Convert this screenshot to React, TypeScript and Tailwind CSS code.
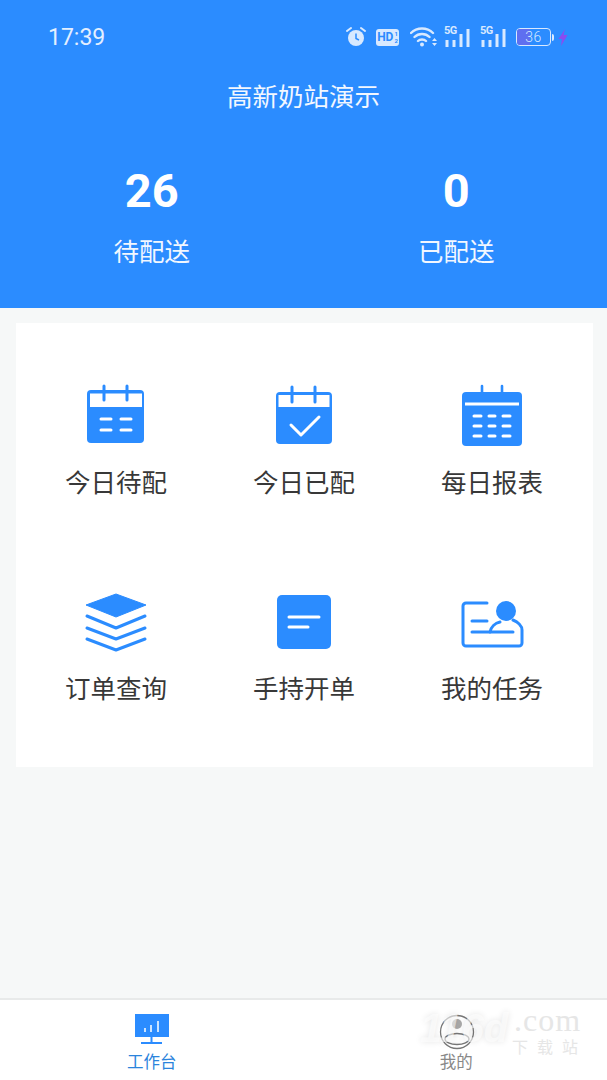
const font = { fontFamily: '"Noto Sans CJK SC", "Noto Sans", sans-serif' };
const BLUE = "#2b8cff";

function Cal1() {
  return (
    <svg width="64" height="64" viewBox="0 0 64 64">
      <rect x="3" y="6" width="57" height="53" rx="4" fill={BLUE} />
      <rect x="6" y="9.500" width="52" height="13.500" fill="#fff" />
      <path d="M20 2v14M43 2v14" stroke={BLUE} strokeWidth="3" strokeLinecap="round" />
      <path d="M17 35h10M37 35h10M17 46h10M37 46h10" stroke="#fff" strokeWidth="3" strokeLinecap="round" />
    </svg>
  );
}
function Cal2() {
  return (
    <svg width="64" height="64" viewBox="0 0 64 64">
      <rect x="4" y="8" width="56" height="52" rx="4" fill={BLUE} />
      <rect x="6.500" y="11" width="51" height="12" fill="#fff" />
      <path d="M20 3v15M43 3v15" stroke={BLUE} strokeWidth="3" strokeLinecap="round" />
      <path d="M19 41l10 10 18-18" fill="none" stroke="#fff" strokeWidth="3" strokeLinecap="round" strokeLinejoin="round" />
    </svg>
  );
}
function Cal3() {
  return (
    <svg width="64" height="64" viewBox="0 0 64 64">
      <rect x="2" y="8" width="60" height="54" rx="4" fill={BLUE} />
      <path d="M22 2v8M42 2v8" stroke={BLUE} strokeWidth="2.600" strokeLinecap="round" />
      <path d="M5 20h54" stroke="#fff" strokeWidth="3" />
      <path d="M14 32h7M29 32h6M43 32h7M14 42h7M29 42h6M43 42h7M14 52h7M29 52h6M43 52h7" stroke="#fff" strokeWidth="3" strokeLinecap="round" />
    </svg>
  );
}
function Layers() {
  return (
    <svg width="64" height="64" viewBox="0 0 64 64">
      <path d="M32 4L62 15 32 27 2 15z" fill={BLUE} stroke={BLUE} strokeWidth="1" strokeLinejoin="round" />
      <path d="M3 26l29 12 29-12M3 38l29 11 29-11M3 49l29 11 29-11" fill="none" stroke={BLUE} strokeWidth="3" strokeLinecap="round" strokeLinejoin="round" />
    </svg>
  );
}
function Doc() {
  return (
    <svg width="64" height="64" viewBox="0 0 64 64">
      <rect x="5" y="5" width="54" height="54" rx="5" fill={BLUE} />
      <path d="M17 27h30M17 37h19" stroke="#fff" strokeWidth="3" strokeLinecap="round" />
    </svg>
  );
}
function Card() {
  return (
    <svg width="64" height="64" viewBox="0 0 64 64">
      <path d="M27 13H6a3 3 0 0 0-3 3v37a3 3 0 0 0 3 3h53a3 3 0 0 0 3-3V40c0-4-4-8-9-10" fill="none" stroke={BLUE} strokeWidth="3" strokeLinecap="round" />
      <circle cx="46" cy="21" r="10" fill={BLUE} />
      <path d="M30 42c1-5 5-9 10-10" fill="none" stroke={BLUE} strokeWidth="3" strokeLinecap="round" />
      <path d="M12 31h15M12 42h41" stroke={BLUE} strokeWidth="3" strokeLinecap="round" />
    </svg>
  );
}

const items = [
  { label: "今日待配", icon: <Cal1 /> },
  { label: "今日已配", icon: <Cal2 /> },
  { label: "每日报表", icon: <Cal3 /> },
  { label: "订单查询", icon: <Layers /> },
  { label: "手持开单", icon: <Doc /> },
  { label: "我的任务", icon: <Card /> },
];

function Signal() {
  return (
    <div className="relative w-[26px] h-[21px]">
      <span className="absolute left-0 top-[-2px] text-[11px] leading-[12px] font-bold text-[#d8e9ff] tracking-[-0.5px]" style={{ fontFamily: '"Roboto", sans-serif' }}>5G</span>
      <svg className="absolute left-0 top-0" width="26" height="21" viewBox="0 0 26 21">
        <path d="M3 13v7M10 13v7M17 7v13M24 2v18" stroke="#d8e9ff" strokeWidth="3" />
      </svg>
    </div>
  );
}

function StatusIcons() {
  return (
    <div className="flex items-center">
      <svg width="20" height="22" viewBox="0 0 20 22" className="mr-[10px]">
        <circle cx="10" cy="12" r="8" fill="#d8e9ff" />
        <path d="M10 7.500V12.500L13 14" fill="none" stroke={BLUE} strokeWidth="1.500" />
        <path d="M1 5l4-3M19 5l-4-3" stroke="#d8e9ff" strokeWidth="2" strokeLinecap="round" />
      </svg>
      <div className="mr-[11px] w-[23px] h-[17px] bg-[#d8e9ff] rounded-[3px] flex items-center justify-center gap-[1px] text-[12px] leading-none font-bold text-[#2b8cff]" style={{ fontFamily: '"Roboto", sans-serif' }}>
        <span>HD</span>
        <span className="flex flex-col text-[6px] leading-[7px]"><span>1</span><span>2</span></span>
      </div>
      <svg width="27" height="22" viewBox="0 0 27 22" className="mr-[7px]">
        <path d="M1 7c6-6 16-6 22 0M4.500 11c4-4 11-4 15 0M8 15c2-2 6-2 8 0" fill="none" stroke="#d8e9ff" strokeWidth="2.400" strokeLinecap="round" />
        <circle cx="12" cy="18.500" r="2" fill="#d8e9ff" />
        <path d="M22 15l2.500-3 2.500 3zM22 17l2.500 3 2.500-3z" fill="#d8e9ff" />
      </svg>
      <Signal />
      <div className="w-[10px]" />
      <Signal />
      <div className="w-[10px]" />
      <div className="relative w-[35px] h-[18px] rounded-[4px] border border-[#d8e9ff] overflow-hidden flex items-center justify-center">
        <div className="absolute left-0 top-0 bottom-0 w-[13px] bg-[#5f6ff0]" />
        <span className="relative text-[14px] leading-none font-light tracking-[0.5px] text-[#d8e9ff]" style={{ fontFamily: '"Roboto", sans-serif' }}>36</span>
      </div>
      <div className="ml-[1px] w-[2px] h-[7px] bg-[#d8e9ff] rounded-r-sm" />
      <svg width="10" height="17" viewBox="0 0 10 17" className="ml-[4px]">
        <path d="M7 0L0.500 10h3.500L3 17l6.500-11H5.500z" fill="#8a4cf0" />
      </svg>
    </div>
  );
}

export default function App() {
  return (
    <div className="relative w-[607px] h-[1080px] overflow-hidden flex flex-col bg-[#f6f8f8]" style={font}>
      <header className="h-[308px] shrink-0 bg-[#2b8cff] text-white flex flex-col">
        <div className="h-[74px] pl-[48px] pr-[39px] flex items-center justify-between">
          <span className="text-[23px] leading-none text-[#e3efff]" style={{ fontFamily: '"Roboto", sans-serif' }}>17:39</span>
          <StatusIcons />
        </div>
        <h1 className="text-center text-[25.5px] leading-[44px] -mt-[1px] font-normal text-[#f2f7ff]">高新奶站演示</h1>
        <div className="grid grid-cols-2 mt-[43px]">
          <div className="flex flex-col items-center">
            <div className="text-[47px] leading-[62px] font-bold" style={{ fontFamily: '"Roboto", sans-serif' }}>26</div>
            <div className="text-[25.5px] leading-[38px] mt-[9px] text-[#f2f7ff]">待配送</div>
          </div>
          <div className="flex flex-col items-center pl-[2px]">
            <div className="text-[47px] leading-[62px] font-bold" style={{ fontFamily: '"Roboto", sans-serif' }}>0</div>
            <div className="text-[25.5px] leading-[38px] mt-[9px] text-[#f2f7ff]">已配送</div>
          </div>
        </div>
      </header>

      <main className="mt-[15px] ml-4 mr-[14px] h-[444px] bg-white pl-[6px] pr-[7px] pt-[61px] grid grid-cols-3 content-start gap-y-[78px]">
        {items.map((it) => (
          <div key={it.label} className="flex flex-col items-center h-[128px]">
            {it.icon}
            <div className="mt-[14px] text-[25.5px] leading-[38px] text-[#383838]">{it.label}</div>
          </div>
        ))}
      </main>

      <div className="flex-1" />

      <nav className="h-[82px] shrink-0 bg-white border-t-2 border-[#e8eaea] grid grid-cols-2 relative">
        <div className="flex flex-col items-center pt-[14px]">
          <svg width="36" height="30" viewBox="0 0 36 30">
            <rect x="1" y="0" width="34" height="23" fill={BLUE} />
            <path d="M17.500 23v5M7 29h21" stroke={BLUE} strokeWidth="2" />
            <path d="M11 14v4M17 11v7M24 7v11" stroke="#fff" strokeWidth="1.500" />
          </svg>
          <span className="text-[16.5px] leading-[24px] text-[#2b84dc] mt-[5px]">工作台</span>
        </div>
        <div className="flex flex-col items-center pt-[14px] pl-[2px]">
          <svg width="36" height="36" viewBox="0 0 36 36" className="ml-[2px]">
            <circle cx="18" cy="18" r="16.500" fill="none" stroke="#777" strokeWidth="1.300" />
            <circle cx="18" cy="10" r="5" fill="#aaa" />
            <ellipse cx="18" cy="25" rx="12" ry="5.500" fill="none" stroke="#777" strokeWidth="1.300" />
          </svg>
          <span className="text-[16.5px] leading-[24px] text-[#888] -mt-[1px]">我的</span>
        </div>
        <div className="absolute left-[420px] top-0 w-[170px] h-[60px] pointer-events-none select-none whitespace-nowrap">
          <span className="absolute left-0 top-[11px] text-[40px] leading-[34px] font-bold italic text-white/60 [text-shadow:0_0_6px_rgba(0,0,0,0.1)]" style={{ fontFamily: '"Liberation Sans", sans-serif' }}>116d</span>
          <span className="absolute left-[94px] top-[7px] text-[32px] leading-[26px] tracking-[1px] text-[#e6e6e6]" style={{ fontFamily: '"Liberation Serif", serif' }}>.com</span>
          <span className="absolute left-[92px] top-[38px] text-[16px] leading-[16px] tracking-[9px] text-[#e6e6e6]">下载站</span>
        </div>
      </nav>
    </div>
  );
}
